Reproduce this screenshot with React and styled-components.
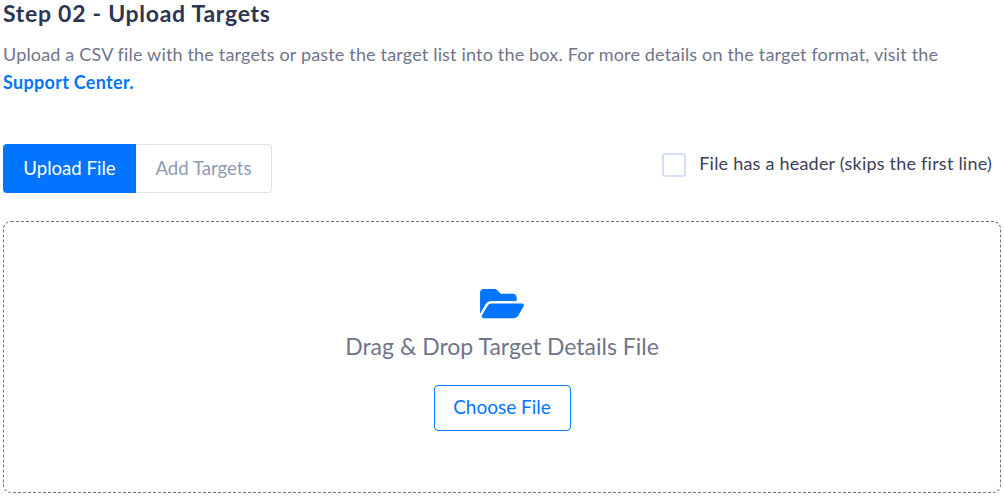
import React from 'react'
import styled, { createGlobalStyle } from 'styled-components'
import { FaFolderOpen } from 'react-icons/fa'

const GlobalStyle = createGlobalStyle`
  body {
    margin: 0;
    background: #fff;
    font-family: Lato, "Open Sans", sans-serif;
  }
`

const App = () => {
  return (
    <Page>
      <GlobalStyle />
      <Title>Step 02 - Upload Targets</Title>
      <Description>
        Upload a CSV file with the targets or paste the target list into the box. For more details on the target format, visit the
        <br />
        <SupportLink href="#">Support Center.</SupportLink>
      </Description>
      <Controls>
        <Tabs>
          <Tab $active>Upload File</Tab>
          <Tab>Add Targets</Tab>
        </Tabs>
        <HeaderOption>
          <Checkbox type="checkbox" />
          <HeaderText>File has a header (skips the first line)</HeaderText>
        </HeaderOption>
      </Controls>
      <Dropzone>
        <FolderIcon />
        <DropText>Drag &amp; Drop Target Details File</DropText>
        <ChooseButton>Choose File</ChooseButton>
      </Dropzone>
    </Page>
  )
}

export default App

const Page = styled.div`
  width: 998px;
  padding-left: 3px;
`

const Title = styled.h2`
  margin: 0;
  font-size: 23px;
  line-height: 26px;
  font-weight: 700;
  letter-spacing: 0.72px;
  color: #2d3651;
`

const Description = styled.p`
  margin: 14px 0 0;
  font-size: 18px;
  line-height: 28px;
  letter-spacing: 0.17px;
  color: #70758a;
`

const SupportLink = styled.a`
  color: #0275ff;
  font-weight: 700;
  letter-spacing: 0.3px;
  text-decoration: none;
`

const Controls = styled.div`
  display: flex;
  justify-content: space-between;
  align-items: flex-start;
  margin-top: 48px;
`

const Tabs = styled.div`
  display: flex;
`

const Tab = styled.button`
  height: 49px;
  padding: 0 0 2px;
  width: ${(p) => (p.$active ? '133px' : '136px')};
  border: ${(p) => (p.$active ? 'none' : '1px solid #e0e2e6')};
  border-left: none;
  border-radius: ${(p) => (p.$active ? '4px 0 0 4px' : '0 4px 4px 0')};
  background: ${(p) => (p.$active ? '#0275ff' : '#fff')};
  color: ${(p) => (p.$active ? '#fff' : '#8f9bb3')};
  font-family: inherit;
  font-size: 18.6px;
`

const HeaderOption = styled.label`
  display: flex;
  align-items: center;
  gap: 13px;
  margin-top: 7px;
  padding-right: 9px;
  font-size: 18px;
  letter-spacing: 0.22px;
  color: #3a4159;
`

const HeaderText = styled.span`
  line-height: 24px;
  padding-bottom: 4px;
`

const Checkbox = styled.input`
  appearance: none;
  width: 24px;
  height: 24px;
  margin: 0;
  border: 2px solid #d5dffc;
  border-radius: 3px;
  background: #fff;
`

const Dropzone = styled.div`
  display: flex;
  flex-direction: column;
  align-items: center;
  box-sizing: border-box;
  height: 272px;
  margin-top: 28px;
  padding-top: 62px;
  border: 1px dashed #70758a;
  border-radius: 8px;
`

const FolderIcon = styled(FaFolderOpen)`
  width: 44px;
  height: 39px;
  color: #0275ff;
`

const DropText = styled.div`
  margin-top: 9px;
  font-size: 23px;
  line-height: 28px;
  color: #70758a;
`

const ChooseButton = styled.button`
  width: 137px;
  height: 46px;
  margin-top: 25px;
  padding: 0 0 3px;
  border: 1px solid #0275ff;
  border-radius: 4px;
  background: #fff;
  color: #0275ff;
  font-family: inherit;
  font-size: 19px;
`
